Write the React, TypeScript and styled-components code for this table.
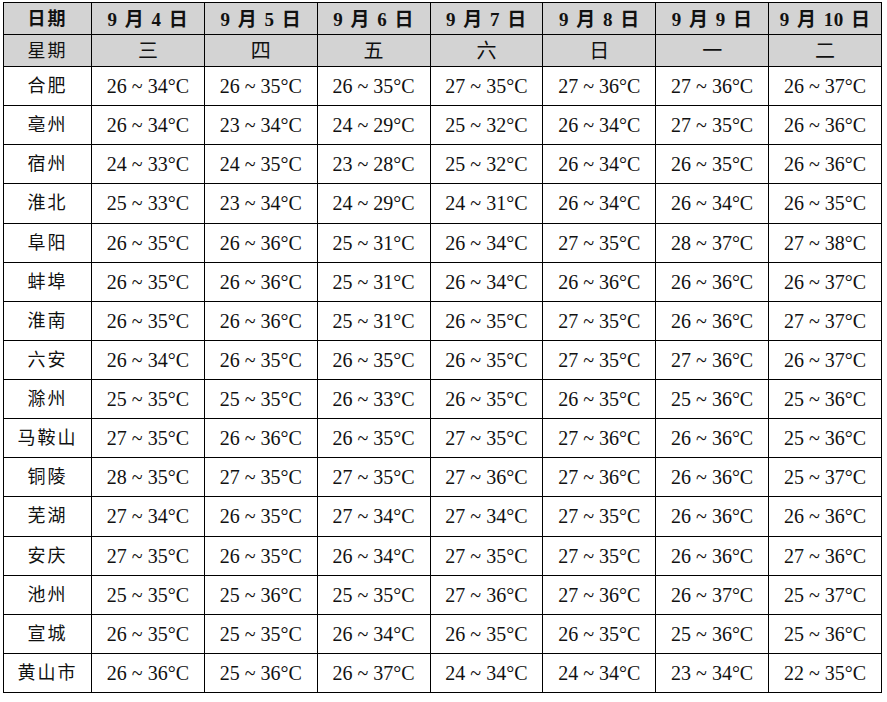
import React from 'react';
import styled, { createGlobalStyle } from 'styled-components';

const GlobalStyle = createGlobalStyle`
  html, body {
    margin: 0;
    padding: 0;
    background: #ffffff;
  }
  body {
    padding: 2px 0 0 3px;
    font-family: 'Liberation Serif', 'Noto Sans CJK SC', serif;
    color: #111;
  }
`;

const Table = styled.table`
  width: 879px;
  table-layout: fixed;
  border-collapse: collapse;
  border: 1.5px solid #000;
`;

const Cell = styled.td<{ $head?: boolean; $bold?: boolean; $h: number }>`
  box-sizing: border-box;
  height: ${(p) => p.$h}px;
  padding: 0;
  border: 1px solid #000;
  text-align: center;
  vertical-align: middle;
  background: ${(p) => (p.$head ? '#d3d3d3' : '#fff')};
  font-size: 20px;
  font-weight: ${(p) => (p.$bold ? 700 : 400)};
  white-space: nowrap;
  line-height: 1;
`;

const CityCell = styled(Cell)`
  font-size: 18px;
  letter-spacing: 2px;
`;

const DateText = styled.span`
  font-size: 19px;
  letter-spacing: 0.5px;
  word-spacing: 2px;
`;

const dates = ['9 月 4 日', '9 月 5 日', '9 月 6 日', '9 月 7 日', '9 月 8 日', '9 月 9 日', '9 月 10 日'];
const weekdays = ['三', '四', '五', '六', '日', '一', '二'];

const rows: [string, string][] = [
  ['合肥', '26-34 26-35 26-35 27-35 27-36 27-36 26-37'],
  ['亳州', '26-34 23-34 24-29 25-32 26-34 27-35 26-36'],
  ['宿州', '24-33 24-35 23-28 25-32 26-34 26-35 26-36'],
  ['淮北', '25-33 23-34 24-29 24-31 26-34 26-34 26-35'],
  ['阜阳', '26-35 26-36 25-31 26-34 27-35 28-37 27-38'],
  ['蚌埠', '26-35 26-36 25-31 26-34 26-36 26-36 26-37'],
  ['淮南', '26-35 26-36 25-31 26-35 27-35 26-36 27-37'],
  ['六安', '26-34 26-35 26-35 26-35 27-35 27-36 26-37'],
  ['滁州', '25-35 25-35 26-33 26-35 26-35 25-36 25-36'],
  ['马鞍山', '27-35 26-36 26-35 27-35 27-36 26-36 25-36'],
  ['铜陵', '28-35 27-35 27-35 27-36 27-36 26-36 25-37'],
  ['芜湖', '27-34 26-35 27-34 27-34 27-35 26-36 26-36'],
  ['安庆', '27-35 26-35 26-34 27-35 27-35 26-36 27-36'],
  ['池州', '25-35 25-36 25-35 27-36 27-36 26-37 25-37'],
  ['宣城', '26-35 25-35 26-34 26-35 26-35 25-36 25-36'],
  ['黄山市', '26-36 25-36 26-37 24-34 24-34 23-34 22-35'],
];

export default function App(): React.ReactElement {
  return (
    <>
      <GlobalStyle />
      <Table>
        <colgroup>
          <col style={{ width: 88 }} />
          {dates.map((d) => (
            <col key={d} />
          ))}
        </colgroup>
        <tbody>
          <tr>
            <CityCell $head $bold $h={32}>日期</CityCell>
            {dates.map((d) => (
              <Cell key={d} $head $bold $h={32}>
                <DateText>{d}</DateText>
              </Cell>
            ))}
          </tr>
          <tr>
            <CityCell $head $h={32}>星期</CityCell>
            {weekdays.map((w) => (
              <Cell key={w} $head $h={32}>{w}</Cell>
            ))}
          </tr>
          {rows.map(([city, temps]) => (
            <tr key={city}>
              <CityCell $h={39.125}>{city}</CityCell>
              {temps.split(' ').map((t, i) => {
                const [lo, hi] = t.split('-');
                return (
                  <Cell key={i} $h={39.125}>
                    {lo} ~ {hi}°C
                  </Cell>
                );
              })}
            </tr>
          ))}
        </tbody>
      </Table>
    </>
  );
}
